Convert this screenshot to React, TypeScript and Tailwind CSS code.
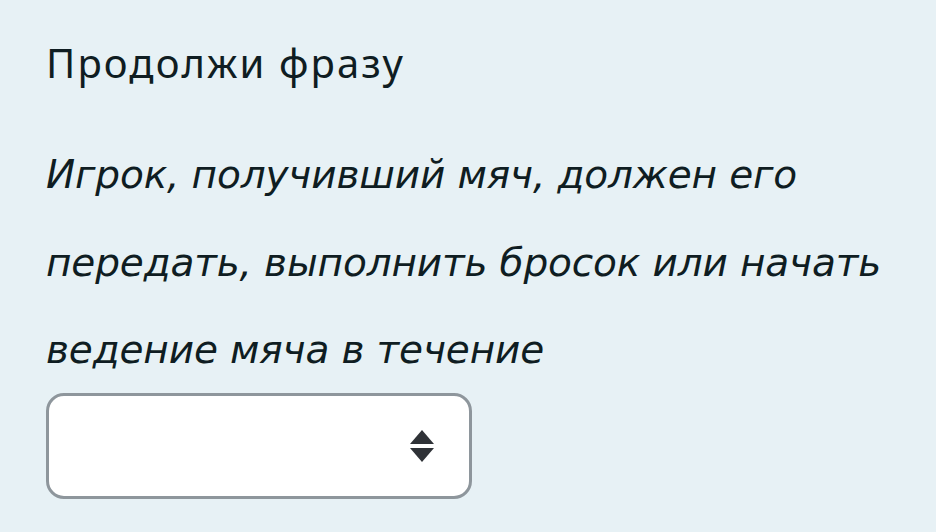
export default function App() {
  return (
    <div className="w-[936px] h-[532px] bg-[#e7f1f5] text-[#0f1d22] overflow-hidden">
      <div className="pl-[46px] pt-[35px]">
        <h4 className="text-[40px] leading-[56px] tracking-[2.1px]" style={{ fontFamily: "'Noto Sans', sans-serif" }}>
          Продолжи фразу
        </h4>
        <p className="mt-[40px] italic text-[39px] leading-[87.5px] tracking-[-0.15px] w-[880px]" style={{ fontFamily: "'DejaVu Sans', sans-serif" }}>
          Игрок, получивший мяч, должен его
          <br />
          передать, выполнить бросок или начать
          <br />
          ведение мяча в течение
        </p>
        <div className="-mt-[1px] w-[426px] h-[106px] rounded-[18px] border-[3px] border-[#8e969c] bg-white flex items-center justify-end pr-[34px]">
          <svg width="26" height="34" viewBox="0 0 26 34" className="text-[#2f3237]">
            <path d="M13 1 L25 15 H1 Z" fill="currentColor" />
            <path d="M1 19 H25 L13 33 Z" fill="currentColor" />
          </svg>
        </div>
      </div>
    </div>
  );
}
